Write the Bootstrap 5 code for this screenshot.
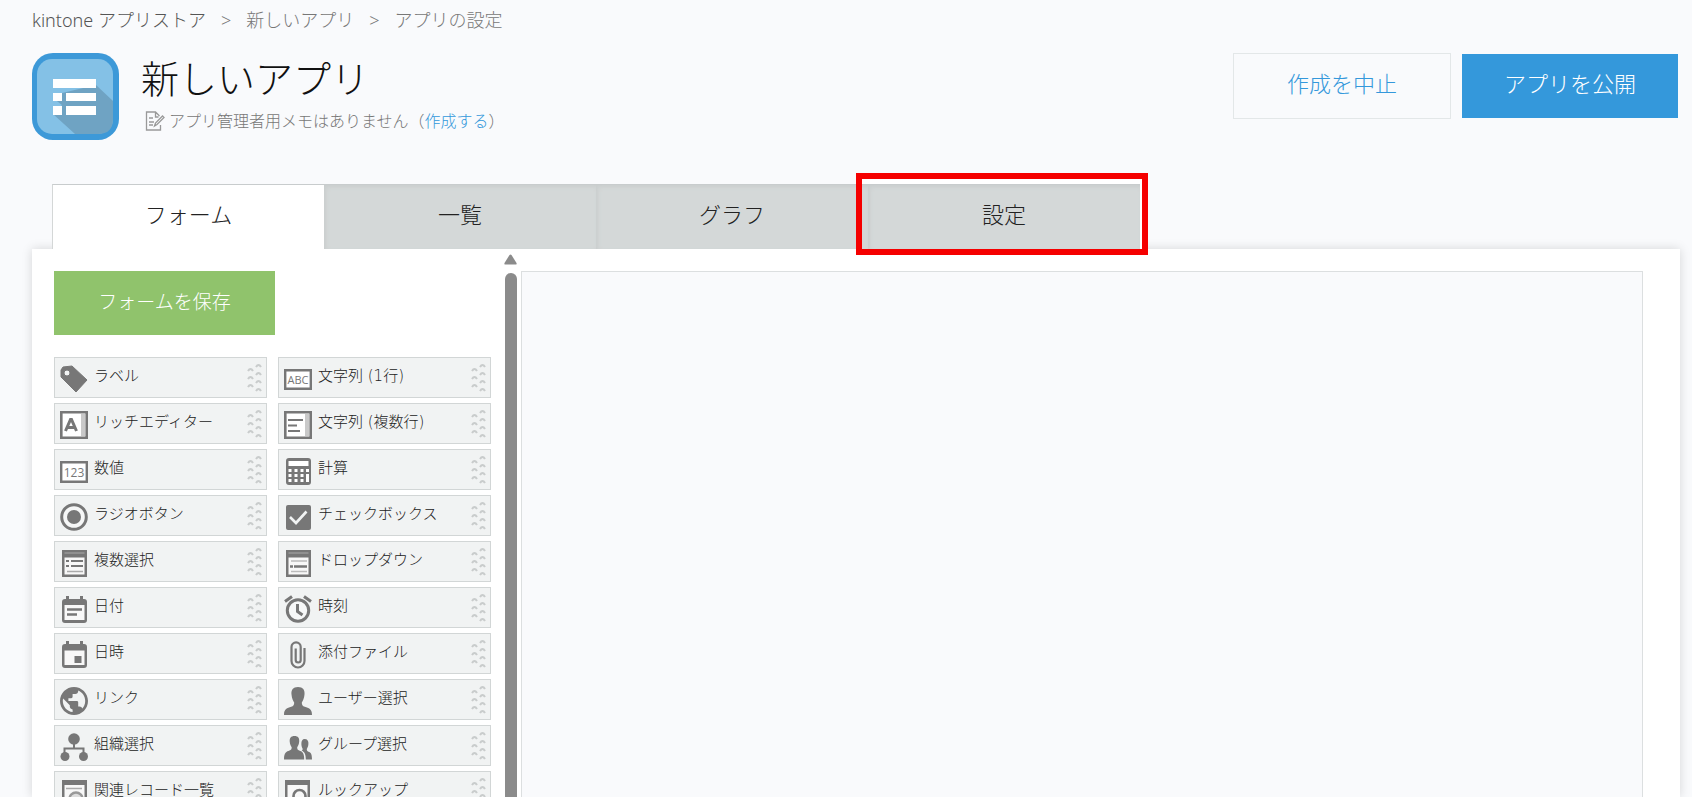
<!DOCTYPE html>
<html lang="ja">
<head>
<meta charset="utf-8">
<meta name="viewport" content="width=device-width, initial-scale=1">
<title>アプリの設定</title>
<link rel="stylesheet" href="https://cdn.jsdelivr.net/npm/bootstrap@5.3.0/dist/css/bootstrap.min.css">
<style>
  body { background: #f9fafc; color: #333; font-family: "Noto Sans", "Noto Sans CJK JP", sans-serif; font-weight: 300; }
  a { color: #3498db; text-decoration: none; }
  button { font-weight: 300; }
  .crumbs { --bs-breadcrumb-divider: ">"; font-size: 18px; line-height: 24px; padding: 8px 32px 0; }
  .crumbs a, .crumbs .active, .crumbs .breadcrumb-item::before { color: #777; }
  .crumbs li:first-child a { color: #555; }
  .crumbs .breadcrumb-item + .breadcrumb-item { padding-left: 15px; }
  .crumbs .breadcrumb-item + .breadcrumb-item::before { padding-right: 15px; }
  .app-head { padding: 21px 13px 0 32px; min-height: 152px; }
  .app-icon { width: 87px; height: 87px; }
  .app-names { padding-left: 22px; }
  .app-title { font-size: 38px; line-height: 50px; font-weight: 300; margin: 0; color: #111; }
  .memo { font-size: 16px; line-height: 24px; color: #777; margin-top: 6px; }
  .act { width: 218px; height: 66px; font-size: 22px; font-weight: 300; border-radius: 0; padding: 0 0 6px; }
  .act-cancel { color: #3498db; border: 1px solid #e3e7e8; }
  .act-publish { background: #3498db; color: #fff; border: 1px solid #f9fafc; }
  .acts { gap: 10px; }
  .tabs { margin-left: 52px; position: relative; z-index: 1; }
  .tabs .nav-link { width: 272px; height: 65px; padding: 0 0 6px; font-size: 22px; color: #222; background: #d4d8d8; border: 0; border-top: 1px solid #c8cccd; border-radius: 0; box-shadow: inset 2px 2px 4px #c9cdcd; }
  .tabs .nav-link.active { background: #fff; color: #222; border-left: 1px solid #d4d7d7; box-shadow: none; }
  .spot { position: absolute; inset: -11px -8px -6px -12px; border: 6px solid #f50000; background: linear-gradient(#fff, #fff) top / 100% 5px no-repeat, linear-gradient(#fff, #fff) right / 2px 100% no-repeat; pointer-events: none; }
  .panel { margin: 0 12px 0 32px; background: #fff; box-shadow: 0 0 10px rgba(0, 0, 0, .15); min-height: 0; }
  .palette { width: 472px; padding: 22px 0 0 22px; }
  .save { width: 221px; height: 64px; font-size: 19px; font-weight: 300; color: #fff; background: #90c36c; border: 0; border-radius: 0; padding: 0 0 2px; margin-bottom: 22px; }
  .fields { display: grid; grid-template-columns: 213px 213px; gap: 5px 11px; }
  .field { height: 41px; display: flex; align-items: center; background: #f1f3f3; border: 1px solid #d2d6d6; padding: 2px 4px 0 5px; font-family: "DejaVu Sans", "Noto Sans CJK JP", sans-serif; font-size: 15px; color: #222; text-align: left; cursor: move; }
  .field .ico { width: 28px; height: 28px; margin-right: 6px; color: #777; flex: none; }
  .field span { flex: 1; white-space: nowrap; padding-bottom: 4px; }
  .field .grip { width: 15px; height: 32px; color: #c9cccc; margin-bottom: 2px; flex: none; }
  .bar { width: 13px; padding-top: 5px; }
  .bar i { width: 12px; background: #8b8b8b; border-radius: 6px 6px 0 0; margin-top: 8px; }
  .drop { margin: 22px 37px 0 4px; background: #f9fafc; border: 1px solid #dcdfe0; border-bottom: 0; }
</style>
</head>
<body class="vh-100 overflow-hidden d-flex flex-column">

<svg class="d-none">
  <symbol id="grip" viewBox="0 0 15 32"><g fill="none" stroke="currentColor" stroke-width="2"><path d="M9 5q2.500-4 5 0M9 13q2.500-4 5 0M9 21q2.500-4 5 0M9 29q2.500-4 5 0M1 9q2.500-4 5 0M1 17q2.500-4 5 0M1 25q2.500-4 5 0"/></g></symbol>
  <symbol id="tag" viewBox="0 0 28 28"><path fill="currentColor" fill-rule="evenodd" stroke="currentColor" stroke-linejoin="round" d="M3 2 12 1 27 15 16 27 1 12V5ZM7 5a3 3 0 1 0 0 6 3 3 0 0 0 0-6Z"/></symbol>
  <symbol id="rich" viewBox="0 0 28 28"><path fill="#fff" stroke="currentColor" stroke-width="2.6" d="M1.3 1.3h25.400v25.400H1.300z"/><path fill="#c9c9c9" d="M21 3h4v22h-4z"/><path fill="none" stroke="currentColor" stroke-width="3" d="M5.500 20 10.500 8.500h1L16.500 20M8 16.500h6"/></symbol>
  <symbol id="num" viewBox="0 0 28 28"><path fill="#fff" stroke="currentColor" stroke-width="2.400" d="M1.200 5.200h25.600v19.600H1.200z"/><text x="14" y="19.500" text-anchor="middle" font-family="Open Sans" font-weight="400" font-size="12" fill="#777">123</text></symbol>
  <symbol id="abc" viewBox="0 0 28 28"><path fill="#fff" stroke="currentColor" stroke-width="2.400" d="M1.200 5.200h25.600v18.600H1.200z"/><text x="14" y="19" text-anchor="middle" font-family="Open Sans" font-weight="400" font-size="11" fill="#777">ABC</text></symbol>
  <symbol id="multi" viewBox="0 0 28 28"><path fill="#fff" stroke="currentColor" stroke-width="2.600" d="M1.300 1.300h25.400v25.400H1.300z"/><path fill="#c9c9c9" d="M21 3h4v22h-4z"/><path stroke="currentColor" stroke-width="2.200" d="M4 9h15M4 14.500h9M4 20h12"/></symbol>
  <symbol id="calc" viewBox="0 0 28 28"><rect x="2" y="1" width="25" height="27" rx="3" fill="currentColor"/><g stroke="#fff" fill="none"><path stroke-width="5" d="M4.500 6.500h20"/><path stroke-width="3" stroke-dasharray="3 3" d="M4.500 13.500h15M4.500 18.500h15M4.500 23.500h15"/><path stroke-width="3" d="M22 13.500h3M23.500 17v8"/></g></symbol>
  <symbol id="radio" viewBox="0 0 28 28"><circle cx="14" cy="14" r="12.300" fill="#f6f7f7" stroke="currentColor" stroke-width="3"/><circle cx="14" cy="14" r="7" fill="currentColor"/></symbol>
  <symbol id="check" viewBox="0 0 28 28"><rect x="2" y="2" width="25" height="25" rx="2" fill="currentColor"/><path fill="none" stroke="#f1f3f3" stroke-width="2.600" d="m6 14 6 6L22.500 8.500"/></symbol>
  <symbol id="list" viewBox="0 0 28 28"><path fill="currentColor" d="M2 1h25v27H2z"/><path stroke="#aaa" d="M4.500 4h20"/><path fill="#f8f8f8" d="M4.500 8.500h20v17h-20z"/><path stroke="currentColor" stroke-width="2" d="M6 12h3M11 12h12M6 17h3M11 17h12"/><path stroke="#aaa" stroke-width="1.500" d="M7 22.500h16"/></symbol>
  <symbol id="drop" viewBox="0 0 28 28"><path fill="currentColor" d="M2 1h25v27H2z"/><path stroke="#aaa" d="M4.500 4h20"/><path fill="#f8f8f8" d="M4.500 8.500h20v17h-20z"/><path stroke="currentColor" stroke-width="2.400" d="M6 17.500h3M10 17.500h13"/><path stroke="#bbb" stroke-width="1.500" d="M7 12h16M7 22.500h16"/></symbol>
  <symbol id="date" viewBox="0 0 28 28"><path fill="currentColor" d="M6 1h3v3h11V1h3v3h1q3 0 3 3v18q0 3-3 3H5q-3 0-3-3V7q0-3 3-3h1Z"/><path fill="#f8f8f8" d="M4.500 10h20v15h-20z"/><path stroke="currentColor" stroke-width="2.400" d="M7 14.500h15M7 19.500h10"/></symbol>
  <symbol id="clock" viewBox="0 0 28 28"><circle cx="14" cy="15.500" r="10.700" fill="#f6f7f7" stroke="currentColor" stroke-width="3"/><path fill="none" stroke="currentColor" stroke-width="3" d="M13.500 9v7.500l5 3.500M1 6.500l7-5M20 1.500l7 5"/></symbol>
  <symbol id="dtime" viewBox="0 0 28 28"><path fill="currentColor" d="M6 0h3v3h11V0h3v3h1q3 0 3 3v18q0 3-3 3H5q-3 0-3-3V6q0-3 3-3h1Z"/><path fill="#f8f8f8" d="M4.500 9.500h20V24h-20z"/><path fill="currentColor" d="M14.500 15h7v7h-7z"/></symbol>
  <symbol id="clip" viewBox="0 0 28 28"><path fill="none" stroke="currentColor" stroke-width="2.200" d="M20.500 7v13a6.500 6.500 0 0 1-13 0V6a4.600 4.600 0 0 1 9.200 0v13a2.500 2.500 0 0 1-5 0V7.500"/></symbol>
  <symbol id="globe" viewBox="0 0 24 24"><path fill="currentColor" d="M12 0C5.400 0 0 5.400 0 12s5.400 12 12 12 12-5.400 12-12S18.600 0 12 0ZM10.800 21.500C6 20.900 2.400 16.900 2.400 12c0-.7.100-1.400.3-2.100L8.400 15.600v1.200c0 1.300 1.100 2.400 2.400 2.400ZM19.100 18.500c-.3-1-1.200-1.700-2.300-1.700h-1.200v-3.600c0-.7-.5-1.200-1.200-1.200H7.200V9.600h2.400c.7 0 1.200-.5 1.200-1.200V6h2.400c1.300 0 2.400-1.100 2.400-2.400v-.5c3.500 1.400 6 4.900 6 8.900 0 2.500-1 4.800-2.500 6.500Z"/></symbol>
  <symbol id="user" viewBox="0 0 28 28"><path fill="currentColor" d="M14 0c5 0 7 3 6.500 7.500-.3 4-1.800 6.500-2.700 8 0 2.500.7 3.500 3 4.300 4 1.200 7.200 2 7.200 8.200H0c0-6.200 3.200-7 7.200-8.200 2.300-.8 3-1.800 3-4.300-.9-1.500-2.400-4-2.700-8C7 3 9 0 14 0Z"/></symbol>
  <symbol id="org" viewBox="0 0 28 28"><g fill="currentColor"><circle cx="14" cy="6" r="5.800"/><circle cx="5" cy="23.500" r="4.500"/><circle cx="23.500" cy="23.500" r="4.500"/></g><path fill="none" stroke="currentColor" stroke-width="2" d="M14 10v5.500M4.500 20v-4.500h19V20"/></symbol>
  <symbol id="group" viewBox="0 0 28 28"><g fill="currentColor"><path d="M10.500 3c3.700 0 5 2.200 4.700 5.500-.2 3-1.200 4.500-2 5.800 0 2 .5 2.700 2 3.300 3 1 5 2 5 8.900H0c0-6.900 2.500-7.900 5.500-8.900 1.500-.6 2.200-1.300 2.200-3.300-.8-1.300-1.800-2.800-2-5.800C5.500 5.200 6.800 3 10.500 3Z"/><path d="M20.500 6c3 0 4.200 2 3.900 5-.2 2.500-1 3.800-1.600 5 0 1.600.4 2.200 1.700 2.700 2.300.9 3.500 2 3.500 7.800h-6.200c0-5-1-7.300-4-9 1-.7 1-1.500.7-2-1.500-2.500-2-9.500 2-9.500Z"/></g></symbol>
  <symbol id="search" viewBox="0 0 28 28"><path fill="currentColor" d="M1 1h25v27H1z"/><path fill="#f8f8f8" d="M3.500 6h20v22h-20z"/><circle cx="15.500" cy="17" r="6" fill="#f8f8f8" stroke="currentColor" stroke-width="2.600"/></symbol>
  <symbol id="related" viewBox="0 0 28 28"><path fill="currentColor" d="M2 1h25v27H2z"/><path fill="#f8f8f8" d="M4.500 6h20v22h-20z"/><path stroke="#aaa" stroke-width="1.500" d="M6 9.500h16"/><circle cx="16" cy="20" r="6.500" fill="#ddd" stroke="#999" stroke-width="2.400"/></symbol>
</svg>

<nav aria-label="パンくず">
  <ol class="breadcrumb crumbs mb-0">
    <li class="breadcrumb-item"><a href="#">kintone アプリストア</a></li>
    <li class="breadcrumb-item"><a href="#">新しいアプリ</a></li>
    <li class="breadcrumb-item active" aria-current="page">アプリの設定</li>
  </ol>
</nav>

<header class="app-head d-flex align-items-start">
  <svg class="app-icon flex-shrink-0" viewBox="0 0 87 87">
    <rect width="87" height="87" rx="21" fill="#3d99d8"/><rect x="5" y="6" width="76" height="75" rx="15" fill="#84c1e6"/>
    <path fill="#6fa3c3" d="M64 32 81 48v18q0 15-15 15H43L21 61l9-9-9-7 9-5Z"/>
    <path fill="#fff" d="M21 26h43v9H21zM21 40h9v8h-9zM34 40h30v8H34zM21 53h9v9h-9zM34 53h30v9H34z"/>
  </svg>
  <div class="app-names flex-grow-1">
    <h1 class="app-title">新しいアプリ</h1>
    <p class="memo d-flex align-items-center mb-0 ps-1">
      <svg class="me-1" width="20" height="20" viewBox="0 0 19 20" fill="none" stroke="#999" stroke-width="1.300"><path d="M15 14v5H1V1h9l4 4M10 1v5h3M3.500 7h4M3.500 11h5M3.500 14h4M9 15l1-3 7-7 1.500 1.500-7 7Z"/></svg>
      <span>アプリ管理者用メモはありません（<a href="#">作成する</a>）</span>
    </p>
  </div>
  <div class="acts d-flex ps-3">
    <button type="button" class="btn act act-cancel">作成を中止</button>
    <button type="button" class="btn act act-publish">アプリを公開</button>
  </div>
</header>

<ul class="nav tabs flex-nowrap" role="tablist">
  <li class="nav-item"><button type="button" role="tab" class="nav-link active" aria-selected="true">フォーム</button></li>
  <li class="nav-item"><button type="button" role="tab" class="nav-link">一覧</button></li>
  <li class="nav-item"><button type="button" role="tab" class="nav-link">グラフ</button></li>
  <li class="nav-item position-relative"><button type="button" role="tab" class="nav-link">設定</button><div class="spot"></div></li>
</ul>

<main class="panel d-flex flex-grow-1">
  <div class="palette flex-shrink-0 overflow-hidden">
    <button type="button" class="btn save">フォームを保存</button>
    <div class="fields">
      <button type="button" class="field"><svg class="ico"><use href="#tag"/></svg><span>ラベル</span><svg class="grip"><use href="#grip"/></svg></button>
      <button type="button" class="field"><svg class="ico"><use href="#abc"/></svg><span>文字列 (1行)</span><svg class="grip"><use href="#grip"/></svg></button>
      <button type="button" class="field"><svg class="ico"><use href="#rich"/></svg><span>リッチエディター</span><svg class="grip"><use href="#grip"/></svg></button>
      <button type="button" class="field"><svg class="ico"><use href="#multi"/></svg><span>文字列 (複数行)</span><svg class="grip"><use href="#grip"/></svg></button>
      <button type="button" class="field"><svg class="ico"><use href="#num"/></svg><span>数値</span><svg class="grip"><use href="#grip"/></svg></button>
      <button type="button" class="field"><svg class="ico"><use href="#calc"/></svg><span>計算</span><svg class="grip"><use href="#grip"/></svg></button>
      <button type="button" class="field"><svg class="ico"><use href="#radio"/></svg><span>ラジオボタン</span><svg class="grip"><use href="#grip"/></svg></button>
      <button type="button" class="field"><svg class="ico"><use href="#check"/></svg><span>チェックボックス</span><svg class="grip"><use href="#grip"/></svg></button>
      <button type="button" class="field"><svg class="ico"><use href="#list"/></svg><span>複数選択</span><svg class="grip"><use href="#grip"/></svg></button>
      <button type="button" class="field"><svg class="ico"><use href="#drop"/></svg><span>ドロップダウン</span><svg class="grip"><use href="#grip"/></svg></button>
      <button type="button" class="field"><svg class="ico"><use href="#date"/></svg><span>日付</span><svg class="grip"><use href="#grip"/></svg></button>
      <button type="button" class="field"><svg class="ico"><use href="#clock"/></svg><span>時刻</span><svg class="grip"><use href="#grip"/></svg></button>
      <button type="button" class="field"><svg class="ico"><use href="#dtime"/></svg><span>日時</span><svg class="grip"><use href="#grip"/></svg></button>
      <button type="button" class="field"><svg class="ico"><use href="#clip"/></svg><span>添付ファイル</span><svg class="grip"><use href="#grip"/></svg></button>
      <button type="button" class="field"><svg class="ico"><use href="#globe"/></svg><span>リンク</span><svg class="grip"><use href="#grip"/></svg></button>
      <button type="button" class="field"><svg class="ico"><use href="#user"/></svg><span>ユーザー選択</span><svg class="grip"><use href="#grip"/></svg></button>
      <button type="button" class="field"><svg class="ico"><use href="#org"/></svg><span>組織選択</span><svg class="grip"><use href="#grip"/></svg></button>
      <button type="button" class="field"><svg class="ico"><use href="#group"/></svg><span>グループ選択</span><svg class="grip"><use href="#grip"/></svg></button>
      <button type="button" class="field"><svg class="ico"><use href="#related"/></svg><span>関連レコード一覧</span><svg class="grip"><use href="#grip"/></svg></button>
      <button type="button" class="field"><svg class="ico"><use href="#search"/></svg><span>ルックアップ</span><svg class="grip"><use href="#grip"/></svg></button>
    </div>
  </div>
  <div class="bar flex-shrink-0 d-flex flex-column align-items-center">
    <svg class="flex-shrink-0" width="13" height="11" viewBox="0 0 13 11"><path fill="#8b8b8b" d="M5.500 1q1-1 2 0l5 8q.5 1.500-1 1.500h-10Q0 10.500.5 9Z"/></svg>
    <i class="flex-grow-1"></i>
  </div>
  <div class="drop flex-grow-1"></div>
</main>

<script src="https://cdn.jsdelivr.net/npm/bootstrap@5.3.0/dist/js/bootstrap.bundle.min.js"></script>
</body>
</html>
